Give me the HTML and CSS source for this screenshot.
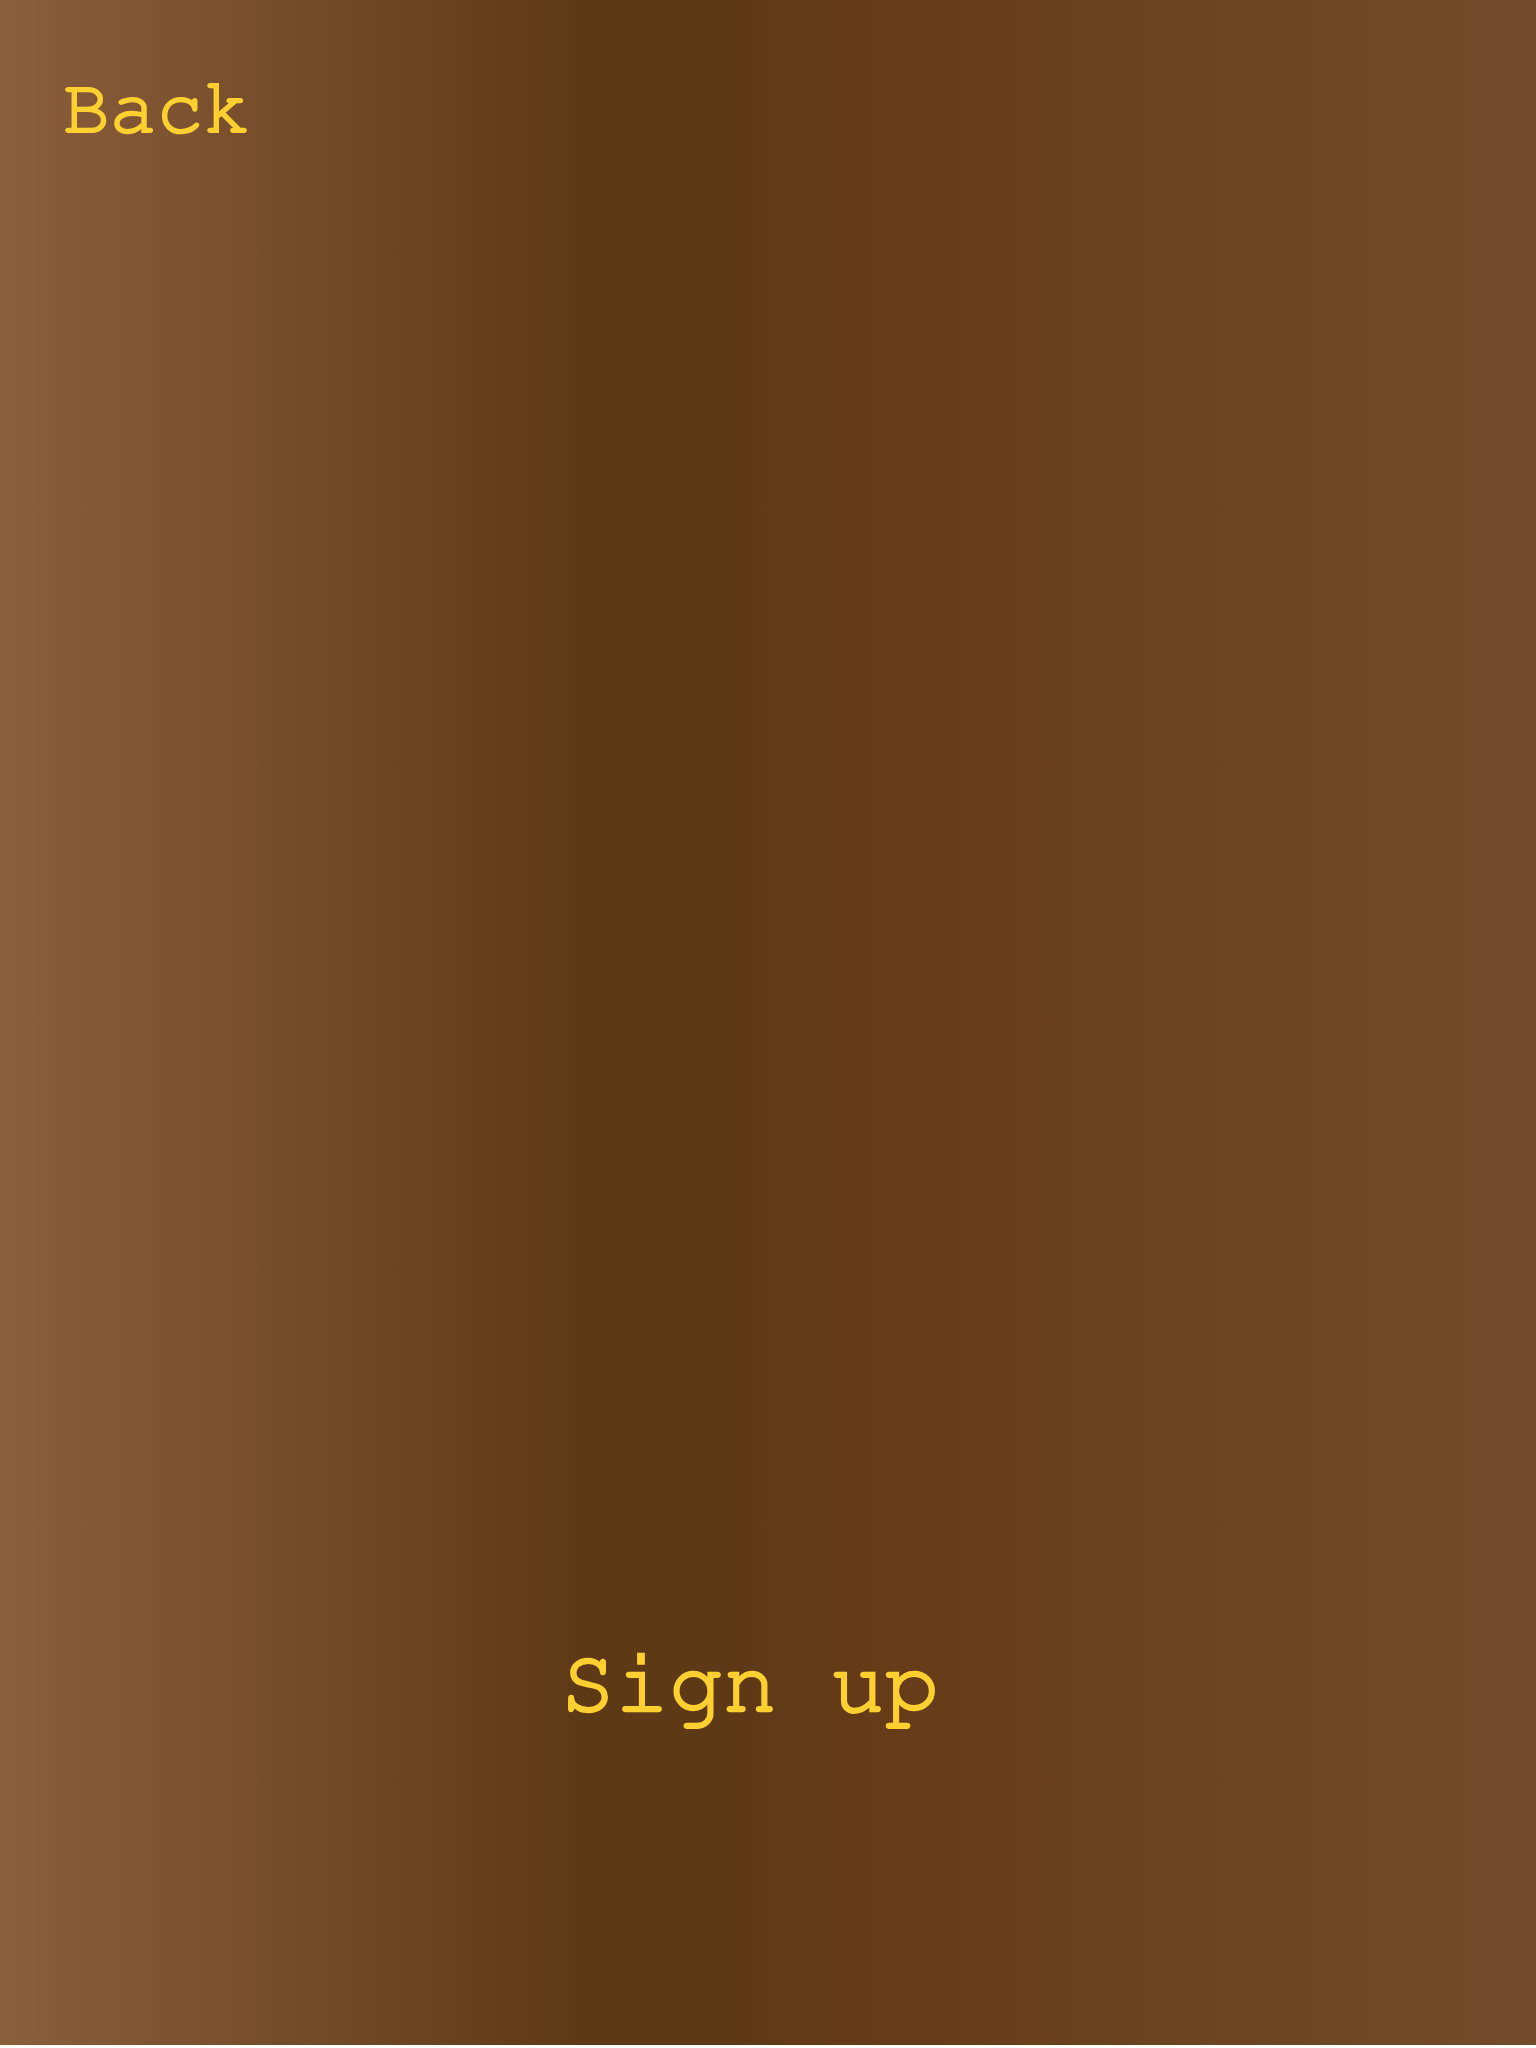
FILE: index.html
```html
<!DOCTYPE html>
<html>
<head>
<meta charset="utf-8">
<link rel="stylesheet" href="styles.css">
</head>
<body>
<div class="screen">
  <header class="top">
    <a class="back">Back</a>
  </header>
  <main class="content"></main>
  <footer class="bottom">
    <button class="signup">Sign up</button>
  </footer>
</div>
</body>
</html>
```
FILE: styles.css
```css
html, body {
  margin: 0;
  padding: 0;
  background: #ffffff;
}
.screen {
  height: 2045px;
  display: flex;
  flex-direction: column;
  background: linear-gradient(to right, #8b5e3c 0%, #5e3916 38%, #5e3916 47%, #663b17 57%, #6c4421 78%, #734b2a 100%);
  font-family: "Nimbus Mono PS", "Nimbus Mono L", "FreeMono", "Courier 10 Pitch", "Courier New", "Liberation Mono", monospace;
  font-weight: normal;
  color: #ffd030;
}
.top {
  padding: 63px 0 0 63px;
}
.back {
  font-size: 78px;
  line-height: 92px;
  display: inline-block;
  -webkit-text-stroke: 2.2px #ffd030;
}
.content {
  flex: 1;
}
.bottom {
  display: flex;
  justify-content: center;
  padding: 0 36px 311px 0;
}
.signup {
  font-family: inherit;
  font-weight: inherit;
  color: inherit;
  background: none;
  border: 0;
  padding: 0;
  font-size: 90px;
  line-height: 100px;
  -webkit-text-stroke: 2.4px #ffd030;
}
```
